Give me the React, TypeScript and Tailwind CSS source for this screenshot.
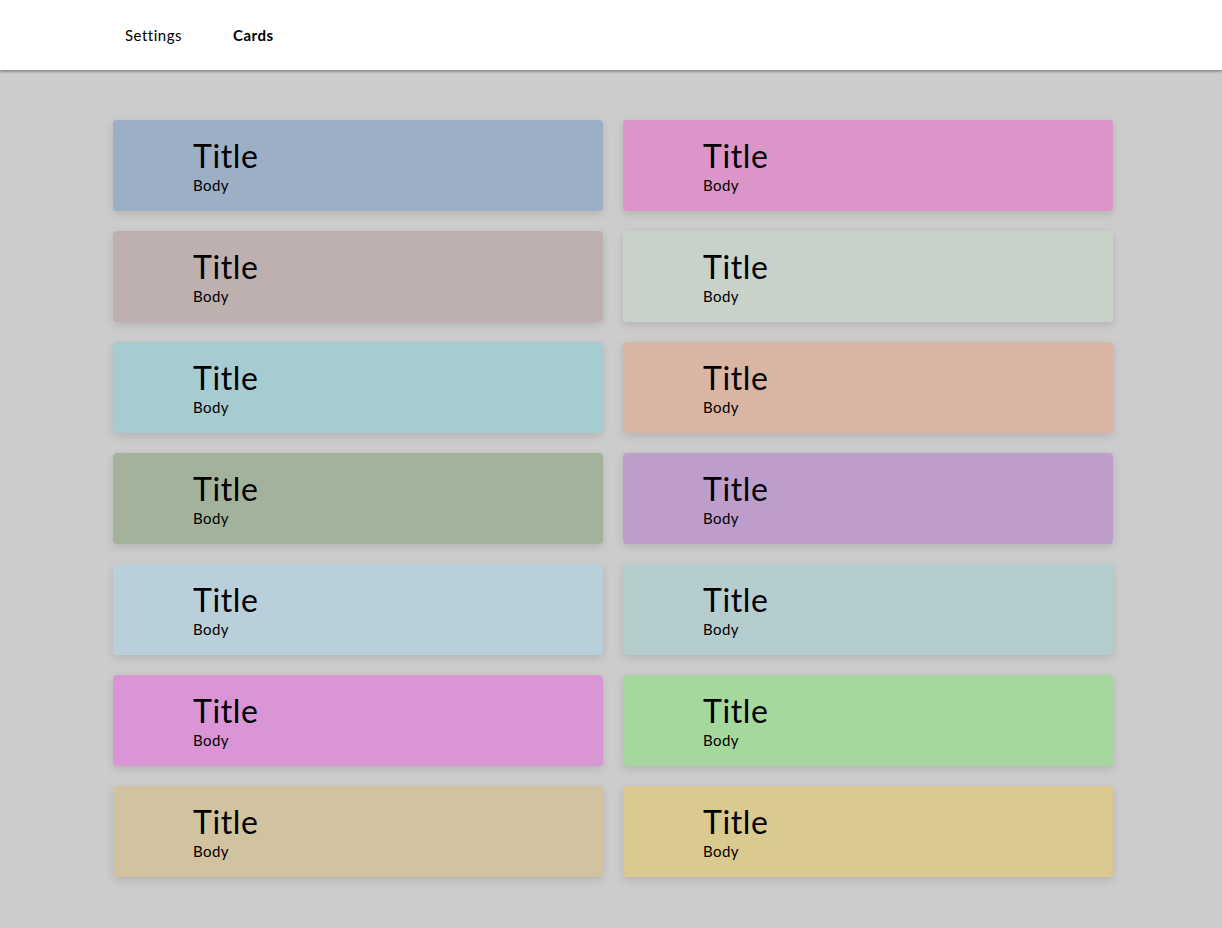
import React from "react";

const colors = [
  ["#9dafc5", "#db95c9"],
  ["#beb0af", "#c8d2c8"],
  ["#a6cbd1", "#dbb5a3"],
  ["#a3b29a", "#bd9dcc"],
  ["#b9d0db", "#b5cdcf"],
  ["#d995d6", "#a5d89c"],
  ["#d2c3a0", "#dbca90"],
];

function Card({ color }: { color: string }) {
  return (
    <div
      className="h-[91px] rounded-[4px] shadow-[0_3px_8px_rgba(0,0,0,0.12)] pl-[80px] pt-[17px]"
      style={{ backgroundColor: color }}
    >
      <div className="text-[32px] leading-[38px] tracking-[0.6px] text-black">Title</div>
      <div className="text-[15px] leading-[20px] tracking-[0.4px] text-black">Body</div>
    </div>
  );
}

export default function App() {
  const flat = colors.flat();
  return (
    <div
      className="min-h-[928px] bg-[#cccccc]"
      style={{ fontFamily: "'Lato', 'Open Sans', sans-serif" }}
    >
      <header className="h-[70px] bg-white shadow-[0_2px_2px_rgba(0,0,0,0.3)] relative z-10">
        <nav className="ml-[125px] flex items-center h-full text-[15px] tracking-[0.5px] text-black">
          <span className="w-[108px]">Settings</span>
          <span className="font-bold">Cards</span>
        </nav>
      </header>
      <main className="ml-[113px] w-[1000px] pt-[50px] grid grid-cols-2 gap-x-[20px] gap-y-[20px]">
        {flat.map((c, i) => (
          <Card key={i} color={c} />
        ))}
      </main>
    </div>
  );
}
